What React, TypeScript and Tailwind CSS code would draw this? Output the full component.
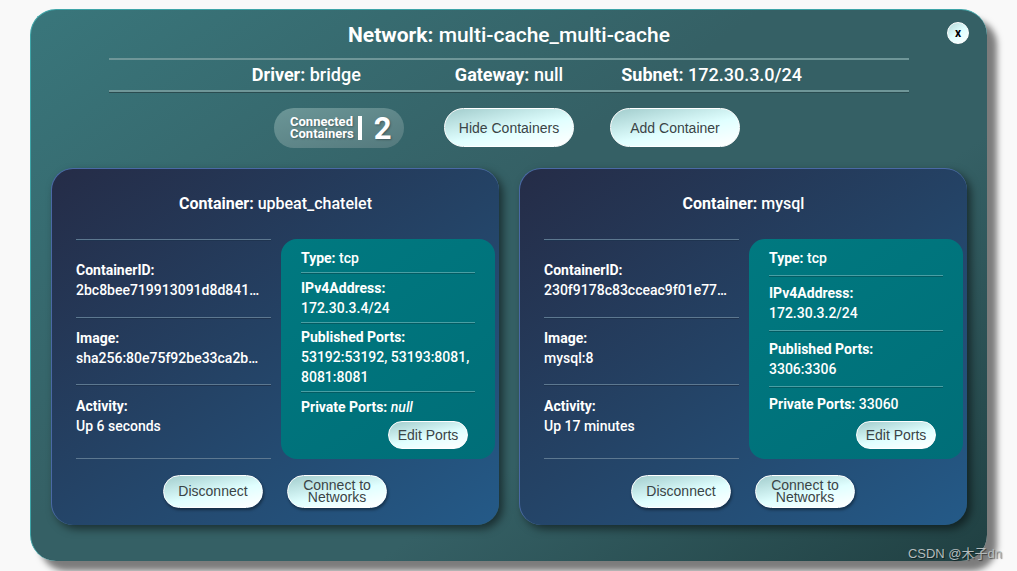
import type { ReactNode } from "react";

type Container = {
  name: string;
  id: string;
  image: string;
  activity: string;
  type: string;
  ipv4: string;
  publishedPorts: string;
  privatePorts: string | null;
};

const containers: Container[] = [
  {
    name: "upbeat_chatelet",
    id: "2bc8bee719913091d8d841c07fe52a",
    image: "sha256:80e75f92be33ca2b6d10f4",
    activity: "Up 6 seconds",
    type: "tcp",
    ipv4: "172.30.3.4/24",
    publishedPorts: "53192:53192, 53193:8081, 8081:8081",
    privatePorts: null,
  },
  {
    name: "mysql",
    id: "230f9178c83cceac9f01e77b40d8c1",
    image: "mysql:8",
    activity: "Up 17 minutes",
    type: "tcp",
    ipv4: "172.30.3.2/24",
    publishedPorts: "3306:3306",
    privatePorts: "33060",
  },
];

function PillButton({ className, children }: { className: string; children: ReactNode }) {
  return (
    <button
      type="button"
      className={`shrink-0 border border-white bg-[linear-gradient(168deg,#9fcaca_0%,#e0ffff_55%,#ffffff_95%)] bg-origin-border text-center font-['Liberation_Sans',sans-serif] text-[#3a4446] ${className}`}
    >
      {children}
    </button>
  );
}

function Field({ label, value, className }: { label: string; value: string; className: string }) {
  return (
    <div className={`border-t border-[#5d7890] pr-1.5 shadow-[inset_0_1px_0_#1f3450] ${className}`}>
      <dt className="font-bold">{label}</dt>
      <dd className="truncate">{value}</dd>
    </div>
  );
}

function PortRule() {
  return <hr className="m-0 h-px border-0 bg-[#4a9fa4] shadow-[0_1px_0_#035c63]" />;
}

function ContainerCard({ container }: { container: Container }) {
  return (
    <article className="min-w-0 rounded-[22px] border-t border-l border-[#4a69a5] bg-[linear-gradient(145deg,#252c47_0%,#244366_50%,#245a88_100%)] pt-[23px] pr-1 pb-[17px] pl-6 shadow-[4px_4px_8px_rgba(0,0,0,0.5)]">
      <h2 className="pr-5 text-center text-[16px] leading-6 font-medium">
        <b className="font-bold">Container:</b> {container.name}
      </h2>
      <div className="mt-[23px] flex gap-2.5 text-[14px] leading-5 font-medium">
        <dl className="min-w-0 flex-1 border-b border-[#5d7890]">
          <Field label="ContainerID:" value={container.id} className="pt-5 pb-[17px]" />
          <Field label="Image:" value={container.image} className="pt-2.5 pb-4" />
          <Field label="Activity:" value={container.activity} className="pt-[11px] pb-[22px]" />
        </dl>
        <section className="flex w-[214px] shrink-0 flex-col justify-between rounded-2xl bg-[linear-gradient(145deg,#007980,#006e78)] pt-[9px] pr-5 pb-2.5 pl-5">
          <p>
            <b className="font-bold">Type:</b> {container.type}
          </p>
          <PortRule />
          <p>
            <b className="block font-bold">IPv4Address:</b> {container.ipv4}
          </p>
          <PortRule />
          <p className="-mr-2">
            <b className="block font-bold">Published Ports:</b> {container.publishedPorts}
          </p>
          <PortRule />
          <p>
            <b className="font-bold">Private Ports:</b> {container.privatePorts ?? <i>null</i>}
          </p>
          <PillButton className="mr-[7px] h-7 w-20 self-end rounded-[14px] text-[14px] leading-none">
            Edit Ports
          </PillButton>
        </section>
      </div>
      <div className="mt-4 flex justify-center gap-6 pr-[21px]">
        <PillButton className="h-[33px] w-[100px] rounded-[17px] pb-0.5 text-[14px] leading-3 shadow-[1px_2px_3px_rgba(0,0,0,0.4)]">
          Disconnect
        </PillButton>
        <PillButton className="h-[33px] w-[100px] rounded-[17px] px-2 pb-0.5 text-[14px] leading-3 shadow-[1px_2px_3px_rgba(0,0,0,0.4)]">
          Connect to Networks
        </PillButton>
      </div>
    </article>
  );
}

export default function App() {
  return (
    <div className="relative min-h-screen overflow-hidden bg-[#f9f9f9] px-[30px] pt-[9px] pb-2.5 font-['Roboto',sans-serif] text-white">
      <main className="relative rounded-[26px] border-t border-l border-[#3fa5a8] bg-[linear-gradient(145deg,#39767b_0%,#356065_42%,#356065_65%,#204042_100%)] pt-[11px] pr-5 pb-9 pl-5 shadow-[10px_10px_6px_rgba(0,0,0,0.5)]">
        <button
          type="button"
          aria-label="Close"
          className="absolute top-3 right-[18px] size-[22px] rounded-full border border-white bg-[linear-gradient(145deg,#b4d8d8,#e0ffff_50%,#ffffff)] text-[12px] leading-none font-bold text-black"
        >
          x
        </button>
        <header className="mx-auto max-w-[800px]">
          <h1 className="pb-[9px] text-center text-[21px] leading-7 font-medium">
            <b className="font-bold">Network:</b> multi-cache_multi-cache
          </h1>
          <div className="border-y-2 border-[#6f9698] py-[3px] shadow-[0_1px_0_#2a4c50]">
            <ul className="mx-auto grid max-w-[608px] grid-cols-3 text-center text-[18px] leading-6 font-medium">
              <li>
                <b className="font-bold">Driver:</b> bridge
              </li>
              <li>
                <b className="font-bold">Gateway:</b> null
              </li>
              <li>
                <b className="font-bold">Subnet:</b> 172.30.3.0/24
              </li>
            </ul>
          </div>
        </header>
        <div className="mt-4 flex items-start justify-center gap-9 pr-1">
          <p className="mr-1 flex h-10 w-[130px] items-center rounded-[20px] bg-[linear-gradient(165deg,#6b9697,#54797d)] pl-4 font-bold [text-shadow:1px_1px_2px_rgba(0,0,0,0.3)]">
            <span className="text-[13px] leading-3">
              Connected
              <br />
              Containers
            </span>
            <span className="ml-1 h-6 w-1 bg-white" />
            <span className="ml-3 text-[31px] leading-none">2</span>
          </p>
          <PillButton className="h-[39px] w-[130px] rounded-[20px] text-[14px] leading-none">
            Hide Containers
          </PillButton>
          <PillButton className="h-[39px] w-[130px] rounded-[20px] text-[14px] leading-none">
            Add Container
          </PillButton>
        </div>
        <section className="mt-5 grid grid-cols-2 gap-5">
          {containers.map((container) => (
            <ContainerCard key={container.name} container={container} />
          ))}
        </section>
      </main>
      <p className="absolute right-[15px] bottom-[7px] font-['Liberation_Sans','Noto_Sans_CJK_SC',sans-serif] text-[13px] leading-5 text-[#b4bcbd] [text-shadow:1px_1px_1px_rgba(0,0,0,0.5)]">
        CSDN @木子dn
      </p>
    </div>
  );
}
